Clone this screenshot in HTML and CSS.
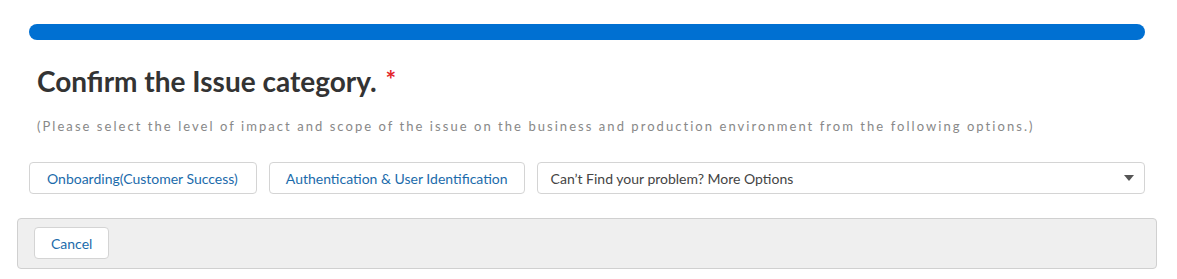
FILE: index.html
```html
<!DOCTYPE html>
<html lang="en">
  <head>
    <meta charset="UTF-8" />
    <meta name="viewport" content="width=device-width, initial-scale=1.0" />
    <title>Issue category</title>
    <link rel="stylesheet" href="styles.css">
  </head>
  <body>
    <div class="page">
      <div class="step">
        <div class="progress"></div>
        <h2 class="title">Confirm the Issue category. <span class="required">*</span></h2>
        <p class="hint">(Please select the level of impact and scope of the issue on the business and production environment from the following options.)</p>
        <div class="options">
          <button type="button" class="option option-wide">Onboarding(Customer Success)</button>
          <button type="button" class="option">Authentication &amp; User Identification</button>
          <div class="picker">
            <span>Can’t Find your problem? More Options</span>
            <svg class="caret" width="10" height="6" viewBox="0 0 10 6"><path d="M0 0h10L5 6z" fill="#555"/></svg>
          </div>
        </div>
      </div>
      <div class="footer">
        <button type="button" class="btn">Cancel</button>
      </div>
    </div>
  </body>
</html>
```

FILE: styles.css
```css
body {
  margin: 0;
  font-family: Lato, "Open Sans", sans-serif;
  background: #fff;
  color: #333;
}

.page {
  padding: 24px 20px 0 17px;
}

.step {
  padding: 0 12px;
}

.progress {
  height: 16px;
  border-radius: 8px;
  background: #0070d2;
}

.title {
  margin: 24px 0 0 8px;
  font-size: 28px;
  font-weight: 700;
  line-height: 34px;
  color: #333;
}
.required {
  color: #e3262b;
  font-size: 25px;
  vertical-align: top;
  position: relative;
  top: -2px;
  margin-left: 2px;
}

.hint {
  margin: 20px 0 0 8px;
  font-size: 13px;
  letter-spacing: 2.05px;
  color: #888;
}

.options {
  display: flex;
  gap: 12px;
  margin-top: 28px;
}

.option {
  height: 32px;
  padding: 0 16px;
  border: 1px solid #d4d4d4;
  border-radius: 4px;
  background: #fff;
  color: #1b6bab;
  font-family: inherit;
  font-size: 14px;
  cursor: pointer;
}
.option-wide {
  padding: 0 18px 0 17px;
}

.picker {
  flex: 1;
  display: flex;
  align-items: center;
  justify-content: space-between;
  height: 30px;
  padding: 0 10px 0 13px;
  border: 1px solid #d4d4d4;
  border-radius: 4px;
  font-size: 14px;
  color: #444;
}

.footer {
  margin-top: 24px;
  padding: 8px 16px 10px;
  height: 31px;
  border: 1px solid #d0d0d0;
  border-radius: 4px;
  background: #efefef;
}

.btn {
  height: 32px;
  padding: 0 16px;
  border: 1px solid #d4d4d4;
  border-radius: 4px;
  background: #fff;
  color: #1b6bab;
  font-family: inherit;
  font-size: 14px;
}
```
